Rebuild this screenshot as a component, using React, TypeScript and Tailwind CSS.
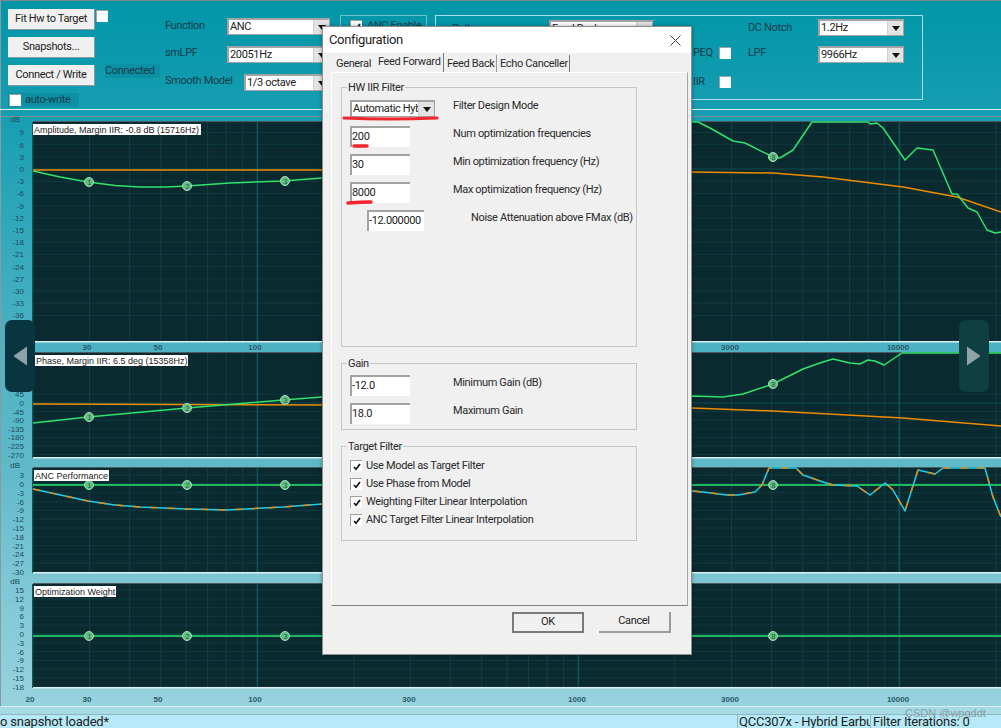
import type { ReactNode } from 'react'

const FREQS = [20, 30, 40, 50, 60, 70, 80, 90, 100, 200, 300, 400, 500, 600, 700, 800, 900, 1000, 2000, 3000, 4000, 5000, 6000, 7000, 8000, 9000, 10000, 20000]
const MAJOR = [100, 1000, 10000]
const X_LABELS: [string, number][] = [['30', 87], ['50', 158], ['100', 255], ['300', 409], ['1000', 577], ['3000', 730], ['10000', 898]]
const NODE_X = [89, 187, 285, 773]

const freqX = (f: number) => 33 + 321 * Math.log10(f / 20)
const pts = (list: number[][]) => list.map((p) => p.join(',')).join(' ')

function ticksFrom(labels: number[], zeroVal: number, y0: number, step: number): [string, number][] {
  return labels.map((v) => [String(v), y0 + ((zeroVal - v) / (labels[0] - labels[1])) * step])
}

interface PlotProps {
  top: number
  bottom: number
  plotTop: number
  plotBottom: number
  ticks: [string, number][]
  dbY?: number
  labelY?: number
  first?: boolean
  title: string
  titleX: number
  titleW: number
  children: ReactNode
}

function Plot({ top, bottom, plotTop, plotBottom, ticks, dbY, labelY, first, title, titleX, titleW, children }: PlotProps) {
  const h = bottom - top
  return (
    <svg width={1001} height={h} viewBox={`0 ${top} 1001 ${h}`} className="block shrink-0 overflow-visible tracking-normal">
      <rect x={33} y={plotTop} width={968} height={plotBottom - plotTop} fill="#0a2a30" />
      {ticks.map(([l, y]) => (
        <line key={l} x1={33} x2={1001} y1={y} y2={y} stroke={l === '0' ? '#0f4a52' : '#103a41'} strokeWidth={1} />
      ))}
      {FREQS.map((f) => (
        <line
          key={f}
          x1={freqX(f)}
          x2={freqX(f)}
          y1={plotTop}
          y2={plotBottom}
          stroke={MAJOR.includes(f) ? '#0f5560' : '#10403f'}
          strokeWidth={MAJOR.includes(f) ? 1.5 : 1}
        />
      ))}
      <rect x={33} y={plotBottom} width={968} height={1.5} fill="#dfeeee" />
      <rect x={32} y={plotTop} width={1} height={plotBottom - plotTop + 1} fill="#0b5a66" />
      <rect x={33} y={plotTop - 1} width={968} height={1} fill="#4a5a60" />
      {first && <rect x={0} y={116} width={1001} height={1} fill="#7f8f96" />}
      {dbY && (
        <text x={20} y={dbY + 3} textAnchor="end" fontSize={8} fill="#1d4c5a" fontFamily="Liberation Sans">
          dB
        </text>
      )}
      {ticks.map(([l, y]) => (
        <text key={l} x={24} y={y + 3} textAnchor="end" fontSize={8} fill="#1d4c5a" fontFamily="Liberation Sans">
          {l}
        </text>
      ))}
      {labelY &&
        X_LABELS.map(([l, x]) => (
          <text key={l} x={x} y={labelY + 3} textAnchor="middle" fontSize={8} fontWeight={700} fill="#2a5a68" fontFamily="Liberation Sans">
            {l}
          </text>
        ))}
      {children}
      <rect x={titleX} y={plotTop + 2} width={titleW} height={11} fill="#ffffff" />
      <text x={titleX + 1} y={plotTop + 11} fontSize={9} fill="#222" fontFamily="Liberation Sans">
        {title}
      </text>
    </svg>
  )
}

function Nodes({ y }: { y: number[] }) {
  return (
    <>
      {NODE_X.map((x, i) => (
        <g key={x}>
          <circle cx={x} cy={y[i]} r={4.5} fill="#62bf82" stroke="#a6dbb8" strokeWidth={1} />
          <text x={x + 0.5} y={y[i] + 2.5} textAnchor="middle" fontSize={7} fill="#1f5a3a" fontFamily="Liberation Sans">
            {i === 3 ? '8' : i + 1}
          </text>
        </g>
      ))}
    </>
  )
}

const AMP_GREEN = [[33, 171], [60, 177], [88, 182], [115, 185.5], [140, 187], [165, 187], [187, 186], [230, 183], [283, 181], [322, 178], [660, 122], [698, 122], [710, 128], [733, 141], [745, 143], [773, 157], [780, 158], [793, 150], [812, 122], [868, 122], [870, 124], [877, 123], [883, 128], [905, 160], [917, 148], [933, 150], [952, 194], [957, 194], [968, 208], [977, 212], [987, 230], [995, 233], [1001, 232]]
const AMP_ORANGE = [[33, 170], [322, 170], [692, 172], [773, 173], [823, 177], [903, 187], [957, 197], [1001, 212]]
const PHASE_GREEN = [[33, 423], [88, 417], [187, 408], [283, 400], [322, 397], [692, 396], [723, 397], [743, 394], [773, 384], [803, 369], [820, 363], [833, 359], [850, 363], [860, 364], [868, 360], [875, 361], [884, 365], [902, 353], [1001, 353]]
const PHASE_ORANGE = [[33, 404], [322, 405], [692, 408], [773, 411], [903, 418], [1001, 426]]
const PERF = [[33, 489], [88, 501], [115, 505], [140, 507], [187, 509], [227, 510], [283, 507], [322, 504], [692, 491], [703, 492], [727, 495], [738, 495], [755, 492], [762, 485], [769, 468], [796, 468], [803, 475], [823, 482], [833, 485], [857, 486], [870, 495], [885, 483], [893, 490], [905, 511], [918, 470], [935, 474], [943, 468], [985, 468], [993, 497], [1001, 517]]

function Curve({ points, color, width = 1.5, dash }: { points: number[][]; color: string; width?: number; dash?: string }) {
  return <polyline points={pts(points)} fill="none" stroke={color} strokeWidth={width} strokeDasharray={dash} strokeLinejoin="round" />
}

function Arrow() {
  return (
    <span className="w-[16px] shrink-0 self-stretch bg-[#e3e3e3] border-l border-[#d0d0d0] flex items-center justify-center">
      <svg width="8" height="5" viewBox="0 0 8 5">
        <path d="M0 0h8L4 5z" fill="#111" />
      </svg>
    </span>
  )
}

function Combo({ value, className }: { value: string; className: string }) {
  return (
    <div className={`flex h-[17px] bg-white border-t-2 border-l-2 border-[#a3a3a3] border-r border-b leading-[14px] text-[#222] ${className}`}>
      <span className="flex-1 overflow-hidden whitespace-nowrap pl-[1px]">{value}</span>
      <Arrow />
    </div>
  )
}

function Check({ checked, className = '' }: { checked?: boolean; className?: string }) {
  return (
    <span className={`w-[12px] h-[12px] shrink-0 bg-white border-t border-l border-[#a0a0a0] flex items-center justify-center ${className}`}>
      {checked && (
        <svg width="8" height="8" viewBox="0 0 8 8">
          <path d="M1 4l2 2.2L7 1" fill="none" stroke="#111" strokeWidth="1.7" />
        </svg>
      )}
    </span>
  )
}

function PanelButton({ children }: { children: ReactNode }) {
  return (
    <button className="h-[21px] w-[87px] pt-[1px] bg-[#f0f0f0] border-r border-b border-[#8a9a9e] text-[#222] whitespace-nowrap">
      {children}
    </button>
  )
}

function Field({ value, w = 'w-[60px]' }: { value: string; w?: string }) {
  return (
    <div className={`${w} h-[21px] shrink-0 bg-white border-t-2 border-l-2 border-[#a3a3a3] leading-[17px] text-[#222] overflow-hidden whitespace-nowrap`}>
      {value}
    </div>
  )
}

function FieldRow({ value, label }: { value: string; label: string }) {
  return (
    <div className="flex items-start h-[21px]">
      <div className="w-[103px] shrink-0">
        <Field value={value} />
      </div>
      <span className="leading-[14px] pt-[1px] whitespace-nowrap">{label}</span>
    </div>
  )
}

function Group({ title, className, children }: { title: string; className: string; children: ReactNode }) {
  return (
    <div className={`relative w-[296px] border border-[#c6c6c6] pl-[8px] ${className}`}>
      <span className="absolute -top-[7px] left-[5px] px-[1px] bg-[#f0f0f0] leading-[14px]">{title}</span>
      {children}
    </div>
  )
}

function TargetRow({ label }: { label: string }) {
  return (
    <div className="flex items-center h-[18px] gap-[4px]">
      <Check checked />
      <span>{label}</span>
    </div>
  )
}

function ConfigDialog() {
  return (
    <div className="absolute left-[322px] top-[26px] w-[370px] h-[629px] bg-[#f0f0f0] border border-[#8f8f8f] shadow-[0_0_4px_rgba(0,0,0,0.35)] text-[#2a2a2a] flex flex-col">
      <div className="h-[26px] shrink-0 bg-white flex items-center justify-between pl-[6px] pr-[10px]">
        <span className="text-[13px] text-[#222]">Configuration</span>
        <svg width="11" height="11" viewBox="0 0 11 11">
          <path d="M0.5 0.5l10 10M10.5 0.5l-10 10" stroke="#444" strokeWidth="1" />
        </svg>
      </div>
      <div className="flex h-[19px] shrink-0 pl-[13px] items-end leading-[14px] whitespace-nowrap">
        <span className="w-[39px] h-[17px] pt-[2px]">General</span>
        <span className="w-[69px] h-[19px] pl-[3px] pt-[2px] border-r border-[#777] bg-[#f0f0f0]">Feed Forward</span>
        <span className="w-[53px] h-[17px] pl-[3px] pt-[2px] border-r border-[#999]">Feed Back</span>
        <span className="w-[73px] h-[17px] pl-[3px] pt-[2px] border-r border-[#777]">Echo Canceller</span>
      </div>
      <div className="ml-[8px] w-[357px] h-[534px] shrink-0 border-t border-l border-white border-r border-r-[#a5a5a5] border-b border-b-[#808080] pl-[9px] pt-[14px] flex flex-col gap-[16px]">
        <Group title="HW IIR Filter" className="h-[260px] pt-[10px]">
          <div className="flex flex-col gap-[7px]">
            <div className="flex items-start h-[21px]">
              <div className="w-[103px] shrink-0 pt-[2px]">
                <Combo value="Automatic Hybrid" className="w-[85px]" />
              </div>
              <span className="leading-[14px] pt-[1px]">Filter Design Mode</span>
            </div>
            <FieldRow value="200" label="Num optimization frequencies" />
            <FieldRow value="30" label="Min optimization frequency (Hz)" />
            <FieldRow value="8000" label="Max optimization frequency (Hz)" />
            <div className="flex items-start h-[21px]">
              <div className="w-[121px] shrink-0 pl-[17px]">
                <Field value="-12.000000" w="w-[57px]" />
              </div>
              <span className="leading-[14px] pt-[1px] whitespace-nowrap">Noise Attenuation above FMax (dB)</span>
            </div>
          </div>
        </Group>
        <Group title="Gain" className="h-[67px] pt-[11px]">
          <div className="flex flex-col gap-[7px]">
            <FieldRow value="-12.0" label="Minimum Gain (dB)" />
            <FieldRow value="18.0" label="Maximum Gain" />
          </div>
        </Group>
        <Group title="Target Filter" className="h-[95px] pt-[10px]">
          <TargetRow label="Use Model as Target Filter" />
          <TargetRow label="Use Phase from Model" />
          <TargetRow label="Weighting Filter Linear Interpolation" />
          <TargetRow label="ANC Target Filter Linear Interpolation" />
        </Group>
      </div>
      <div className="flex justify-end gap-[15px] pt-[6px] pr-[20px]">
        <button className="w-[72px] h-[21px] border-2 border-[#7a7a7a] bg-[#f0f0f0] text-[#222]">OK</button>
        <button className="w-[72px] h-[21px] border-r-2 border-b-2 border-[#9a9a9a] bg-[#f0f0f0] text-[#222]">Cancel</button>
      </div>
      <svg className="absolute left-0 top-0 pointer-events-none" width="368" height="200" viewBox="323 27 368 200">
        <path d="M344 118q45 2 93 0" fill="none" stroke="#f0252d" strokeWidth="3" strokeLinecap="round" />
        <path d="M354 146h13" fill="none" stroke="#f0252d" strokeWidth="3.5" strokeLinecap="round" />
        <path d="M348 203q12 -1 23 -1" fill="none" stroke="#f0252d" strokeWidth="3.5" strokeLinecap="round" />
      </svg>
    </div>
  )
}

function NavArrow({ left }: { left?: boolean }) {
  return (
    <div className={`absolute top-[320px] w-[30px] h-[72px] rounded-[7px] flex items-center justify-center ${left ? 'left-[5px] bg-[#08353f]' : 'left-[959px] bg-[#0f3e43]'}`}>
      <svg width="14" height="20" viewBox="0 0 14 20">
        <path d={left ? 'M14 1v18L1 10z' : 'M0 1v18l13-9z'} fill="#8fa3a8" stroke="#8fa3a8" strokeLinejoin="round" />
      </svg>
    </div>
  )
}

const labelBg = 'bg-[#0d90a4]'

export default function App() {
  return (
    <div className="relative w-[1001px] h-[728px] overflow-hidden flex flex-col shadow-[inset_1px_0_0_#8a9aa0] bg-[linear-gradient(180deg,#0096a8_0%,#169db1_15%,#4bb2c3_47%,#5fb9c9_64%,#7cc6d4_79%,#98d2de_97%)] font-['Roboto',sans-serif] text-[11px] tracking-[-0.35px] text-[#123c4a]">
      <div className="h-[108px] shrink-0 flex pl-[8px] border-t border-[#808a8e] border-b border-b-[#d8f2f6] box-content">
        <div className="w-[87px] shrink-0 flex flex-col gap-[7px] pt-[8px]">
          <PanelButton>Fit Hw to Target</PanelButton>
          <PanelButton>Snapshots...</PanelButton>
          <PanelButton>Connect / Write</PanelButton>
          <div className={`flex items-center gap-[4px] w-[71px] h-[14px] pl-[1px] whitespace-nowrap ${labelBg}`}>
            <Check />
            <span>auto-write</span>
          </div>
        </div>
        <div className="w-[70px] shrink-0 flex flex-col pt-[9px] pl-[1px]">
          <Check />
          <span className={`mt-[42px] ml-[9px] w-[55px] leading-[14px] whitespace-nowrap ${labelBg}`}>Connected</span>
        </div>
        <div className="w-[175px] shrink-0 flex flex-col pt-[17px]">
          <div className="flex h-[28px]">
            <span className="w-[62px] leading-[14px] pt-[1px]">Function</span>
            <Combo value="ANC" className="w-[103px]" />
          </div>
          <div className="flex h-[28px]">
            <span className="w-[62px] leading-[14px]">smLPF</span>
            <Combo value="20051Hz" className="w-[103px]" />
          </div>
          <div className="flex h-[28px]">
            <span className="w-[79px] leading-[14px] whitespace-nowrap">Smooth Model</span>
            <Combo value="1/3 octave" className="w-[86px]" />
          </div>
        </div>
        <div className="w-[87px] h-[85px] mt-[14px] shrink-0 border border-[#6fc0cc] pl-[9px] pt-[4px] flex items-start gap-[5px]">
          <Check checked />
          <span className="leading-[12px] whitespace-nowrap">ANC Enable</span>
        </div>
        <div className="w-[488px] h-[85px] mt-[14px] ml-[8px] shrink-0 border border-[#a9dde5] flex">
          <div className="w-[113px] pl-[16px] pt-[5px]">Path</div>
          <div className="w-[144px] pt-[4px]">
            <Combo value="Feed Back" className="w-[104px]" />
          </div>
          <div className="w-[38px] pt-[31px]">
            <div className="flex items-center h-[12px] justify-between">
              <span>PEQ</span>
              <Check />
            </div>
            <div className="flex items-center h-[12px] mt-[17px] justify-between">
              <span>IIR</span>
              <Check />
            </div>
          </div>
          <div className="ml-[17px] w-[70px] pt-[5px]">
            <div className="leading-[14px] h-[25px]">DC Notch</div>
            <div className="leading-[14px]">LPF</div>
          </div>
          <div className="pt-[3px] flex flex-col gap-[10px]">
            <Combo value="1.2Hz" className="w-[86px]" />
            <Combo value="9966Hz" className="w-[86px]" />
          </div>
        </div>
      </div>
      <div className="h-[6px] shrink-0" />
      <Plot
        first
        top={116}
        bottom={352}
        plotTop={122}
        plotBottom={341}
        dbY={119}
        labelY={347}
        ticks={ticksFrom([9, 6, 3, 0, -3, -6, -9, -12, -15, -18, -21, -24, -27, -30, -33, -36], 0, 169, 12.2)}
        title="Amplitude, Margin IIR: -0.8 dB (15716Hz)"
        titleX={33}
        titleW={168}
      >
        <Curve points={AMP_ORANGE} color="#f08c00" />
        <Curve points={AMP_GREEN} color="#2fe36b" />
        <Nodes y={[182, 186, 181, 157]} />
      </Plot>
      <Plot
        top={352}
        bottom={468}
        plotTop={353}
        plotBottom={457}
        ticks={ticksFrom([45, 0, -45, -90, -135, -180, -225, -270], 0, 403, 8.6)}
        title="Phase, Margin IIR: 6.5 deg (15358Hz)"
        titleX={35}
        titleW={153}
      >
        <Curve points={PHASE_ORANGE} color="#f08c00" />
        <Curve points={PHASE_GREEN} color="#2fe36b" />
        <Nodes y={[417, 408, 400, 384]} />
      </Plot>
      <Plot
        top={468}
        bottom={584}
        plotTop={468}
        plotBottom={572}
        dbY={465}
        ticks={ticksFrom([3, 0, -3, -6, -9, -12, -15, -18, -21, -24, -27, -30], 0, 484, 8.8)}
        title="ANC Performance"
        titleX={34}
        titleW={75}
      >
        <rect x={33} y={484} width={968} height={2} fill="#1fb85c" />
        <Curve points={PERF} color="#1fd0ee" />
        <Curve points={PERF} color="#e88a10" dash="7 10" />
        <Nodes y={[485, 485, 485, 485]} />
      </Plot>
      <Plot
        top={584}
        bottom={706}
        plotTop={584}
        plotBottom={687}
        dbY={581}
        labelY={699}
        ticks={ticksFrom([15, 12, 9, 6, 3, 0, -3, -6, -9, -12, -15, -18], 0, 634, 8.8)}
        title="Optimization Weight"
        titleX={34}
        titleW={82}
      >
        <text x={30} y={702} textAnchor="middle" fontSize={8} fontWeight={700} fill="#2a5a68" fontFamily="Liberation Sans">
          20
        </text>
        <rect x={33} y={635} width={968} height={2} fill="#1fb85c" />
        <Nodes y={[636, 636, 636, 636]} />
      </Plot>
      <div className="h-[8px] shrink-0 border-t border-[#d5eef2] bg-[#a6dbe6]" />
      <div className="flex-1 flex items-stretch border-t border-[#8fb6c0] bg-[#b6eaf8] text-[13px] leading-[14px] tracking-[-0.2px] text-[#222]">
        <span className="w-[737px] shrink-0 whitespace-nowrap">o snapshot loaded*</span>
        <span className="w-[134px] shrink-0 overflow-hidden whitespace-nowrap border-l border-r border-[#8fb6c0] pl-[1px]">QCC307x - Hybrid Earbud</span>
        <span className="whitespace-nowrap pl-[2px]">Filter Iterations: 0</span>
      </div>
      <ConfigDialog />
      <NavArrow left />
      <NavArrow />
      <span className="absolute left-[905px] top-[705px] text-[11px] tracking-normal text-[#7f8c90]/80 font-['Liberation_Sans',sans-serif] whitespace-nowrap">CSDN @wpgddt</span>
    </div>
  )
}
